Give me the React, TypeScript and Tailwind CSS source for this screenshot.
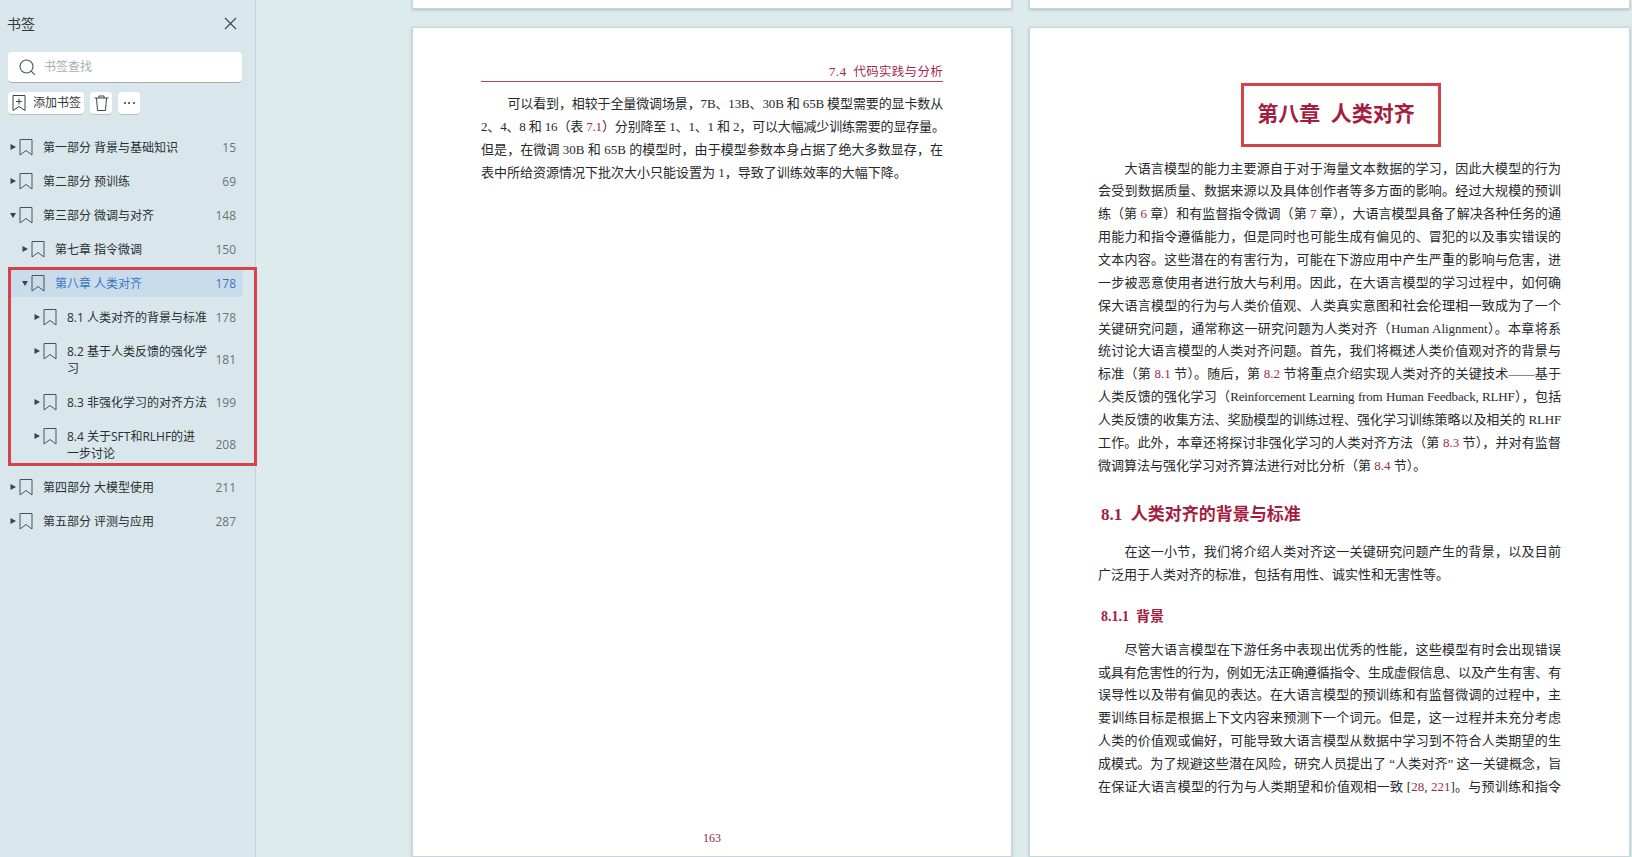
import type { ReactNode } from 'react';

const SERIF = "font-['Liberation_Serif','Noto_Sans_CJK_SC',serif]";

const BOOKMARKS = [
  { depth: 0, open: false, label: '第一部分 背景与基础知识', page: 15 },
  { depth: 0, open: false, label: '第二部分 预训练', page: 69 },
  { depth: 0, open: true, label: '第三部分 微调与对齐', page: 148 },
  { depth: 1, open: false, label: '第七章 指令微调', page: 150 },
  { depth: 1, open: true, label: '第八章 人类对齐', page: 178, active: true },
  { depth: 2, open: false, label: '8.1 人类对齐的背景与标准', page: 178 },
  { depth: 2, open: false, label: '8.2 基于人类反馈的强化学\n习', page: 181 },
  { depth: 2, open: false, label: '8.3 非强化学习的对齐方法', page: 199 },
  { depth: 2, open: false, label: '8.4 关于SFT和RLHF的进\n一步讨论', page: 208 },
  { depth: 0, open: false, label: '第四部分 大模型使用', page: 211 },
  { depth: 0, open: false, label: '第五部分 评测与应用', page: 287 },
];

const DEPTH_PADDING = ['pl-[2px]', 'pl-[14px]', 'pl-[26px]'];

function BookmarkIcon() {
  return (
    <svg width="14" height="17" viewBox="0 0 14 17" fill="none" stroke="#4b5357" strokeWidth="1" className="shrink-0">
      <path d="M1 .5h12v15.5L7 11.5 1 16z" />
    </svg>
  );
}

function Caret({ open }: { open: boolean }) {
  return (
    <svg width="6" height="6" viewBox="0 0 6 6" fill="#3c4346" className="shrink-0">
      {open ? <path d="M0 1h6L3 6z" /> : <path d="M.5 0L6 3 .5 6z" />}
    </svg>
  );
}

function BookmarkRow({ item }: { item: (typeof BOOKMARKS)[number] }) {
  return (
    <div
      className={`ml-2 mr-3 flex pr-[7px] text-[12px] leading-[17px] ${DEPTH_PADDING[item.depth]} ${
        item.active ? 'my-[3px] rounded bg-[#c9dcec] py-[5.5px] text-[#3b76bd]' : 'py-[8.5px] text-[#2a2f31]'
      }`}
    >
      <div className="flex h-[17px] items-center gap-[3px]">
        <Caret open={item.open} />
        <BookmarkIcon />
      </div>
      <div className="ml-[10px] min-w-0 flex-1 whitespace-pre-line">{item.label}</div>
      <div className={`flex w-[24px] shrink-0 items-center justify-end ${item.active ? '' : 'text-[#6b7275]'}`}>
        {item.page}
      </div>
    </div>
  );
}

function Sidebar() {
  return (
    <aside className="flex w-[256px] shrink-0 flex-col border-r border-[#c3d2d8] bg-[#d9e7ec] font-['Open_Sans','Noto_Sans_CJK_SC',sans-serif]">
      <div className="flex h-[46px] items-center justify-between pl-[7px] pr-[18px] text-[14px] text-[#33393c]">
        <span>书签</span>
        <svg width="13" height="13" viewBox="0 0 13 13" stroke="#3d4447" strokeWidth="1.1">
          <path d="M1 1l11 11M12 1L1 12" />
        </svg>
      </div>
      <div className="mx-2 mt-[6px] flex h-[31px] w-[234px] items-center gap-[8px] rounded border-b border-[#a3adb0] bg-white pl-[11px] text-[12px] text-[#a9aeb0]">
        <svg width="17" height="17" viewBox="0 0 17 17" fill="none" stroke="#4d5558" strokeWidth="1.1">
          <circle cx="7.5" cy="7.5" r="6.5" />
          <path d="M12.2 12.2l3.6 3.6" />
        </svg>
        书签查找
      </div>
      <div className="ml-2 mt-[9px] flex h-[23px] gap-[6px] text-[12px] text-[#33393c]">
        <div className="flex w-[76px] items-center rounded border-b border-[#b5c0c3] bg-white pl-[4px]">
          <svg width="14" height="16" viewBox="0 0 14 16" fill="none" stroke="#3d4447" strokeWidth="1">
            <path d="M1 .5h12v15L7 11.5 1 15.5zM7 3.5v6M4 6.5h6" />
          </svg>
          <span className="ml-[7px]">添加书签</span>
        </div>
        <div className="flex w-[22px] items-center justify-center rounded border-b border-[#b5c0c3] bg-white">
          <svg width="15" height="16" viewBox="0 0 15 16" fill="none" stroke="#3d4447" strokeWidth="1">
            <path d="M.5 3h14M5 3V1h5v2M2.5 3l1 12.5h8l1-12.5" />
          </svg>
        </div>
        <div className="flex w-[22px] items-center justify-center gap-[2.5px] rounded border-b border-[#b5c0c3] bg-white">
          <span className="size-[2px] rounded-full bg-[#33393c]" />
          <span className="size-[2px] rounded-full bg-[#33393c]" />
          <span className="size-[2px] rounded-full bg-[#33393c]" />
        </div>
      </div>
      <div className="relative mt-[15px]">
        {BOOKMARKS.map((item) => (
          <BookmarkRow key={item.label} item={item} />
        ))}
        <div className="pointer-events-none absolute left-[8px] top-[137px] h-[199px] w-[249px] border-[3px] border-[#d4434a]" />
      </div>
    </aside>
  );
}

function Line({ children, indent, last, tight }: { children: ReactNode; indent?: boolean; last?: boolean; tight?: boolean }) {
  return (
    <div
      className={`whitespace-nowrap text-[13px] leading-[22.85px] text-[#26292b] ${indent ? 'pl-[26.4px]' : ''} ${
        tight ? 'tracking-[-0.16px]' : ''
      } ${last ? '' : 'text-justify [text-align-last:justify]'}`}
    >
      {children}
    </div>
  );
}

function Ref({ children }: { children: ReactNode }) {
  return <span className="text-[#9c2b45]">{children}</span>;
}

function LeftPage() {
  return (
    <section className="flex min-h-0 flex-1 flex-col border border-[#c8d6d8] bg-white px-[68px] pt-[37px] shadow-[0_1px_3px_rgba(90,120,130,0.4)]">
      <div className="h-[17px] border-b-[1.5px] border-[#b8456a] text-right text-[12.5px] leading-[14px] tracking-[0.3px] text-[#a4294f]">
        <span className="text-[13.5px]">7.4</span>&nbsp; 代码实践与分析
      </div>
      <div className="mt-[11px]">
        <Line indent tight>可以看到，相较于全量微调场景，7B、13B、30B 和 65B 模型需要的显卡数从</Line>
        <Line tight>2、4、8 和 16（表 <Ref>7.1</Ref>）分别降至 1、1、1 和 2，可以大幅减少训练需要的显存量。</Line>
        <Line>但是，在微调 30B 和 65B 的模型时，由于模型参数本身占据了绝大多数显存，在</Line>
        <Line last>表中所给资源情况下批次大小只能设置为 1，导致了训练效率的大幅下降。</Line>
      </div>
      <div className="mb-[10px] mt-auto text-center text-[12px] leading-4 text-[#8a2a4a]">163</div>
    </section>
  );
}

function RightPage() {
  return (
    <section className="min-h-0 flex-1 border border-[#c8d6d8] bg-white px-[68px] pt-[55px] shadow-[0_1px_3px_rgba(90,120,130,0.4)]">
      <div className="ml-[143px] flex h-[64px] w-[200px] items-center justify-center border-[3px] border-[#d4434a] pr-[10px] text-[21px] font-bold text-[#a51c3e]">
        第八章&nbsp; 人类对齐
      </div>
      <div className="mt-[10.6px]">
        <Line indent>大语言模型的能力主要源自于对于海量文本数据的学习，因此大模型的行为</Line>
        <Line>会受到数据质量、数据来源以及具体创作者等多方面的影响。经过大规模的预训</Line>
        <Line>练（第 <Ref>6</Ref> 章）和有监督指令微调（第 <Ref>7</Ref> 章），大语言模型具备了解决各种任务的通</Line>
        <Line>用能力和指令遵循能力，但是同时也可能生成有偏见的、冒犯的以及事实错误的</Line>
        <Line>文本内容。这些潜在的有害行为，可能在下游应用中产生严重的影响与危害，进</Line>
        <Line>一步被恶意使用者进行放大与利用。因此，在大语言模型的学习过程中，如何确</Line>
        <Line>保大语言模型的行为与人类价值观、人类真实意图和社会伦理相一致成为了一个</Line>
        <Line>关键研究问题，通常称这一研究问题为人类对齐（Human Alignment）。本章将系</Line>
        <Line>统讨论大语言模型的人类对齐问题。首先，我们将概述人类价值观对齐的背景与</Line>
        <Line>标准（第 <Ref>8.1</Ref> 节）。随后，第 <Ref>8.2</Ref> 节将重点介绍实现人类对齐的关键技术——基于</Line>
        <Line tight>人类反馈的强化学习（Reinforcement Learning from Human Feedback, RLHF），包括</Line>
        <Line tight>人类反馈的收集方法、奖励模型的训练过程、强化学习训练策略以及相关的 RLHF</Line>
        <Line>工作。此外，本章还将探讨非强化学习的人类对齐方法（第 <Ref>8.3</Ref> 节），并对有监督</Line>
        <Line last>微调算法与强化学习对齐算法进行对比分析（第 <Ref>8.4</Ref> 节）。</Line>
      </div>
      <h2 className="ml-[3px] mt-[26px] h-[24px] text-[17px] font-bold leading-[24px] text-[#a51c3e]">8.1&nbsp; 人类对齐的背景与标准</h2>
      <div className="mt-[13.6px]">
        <Line indent>在这一小节，我们将介绍人类对齐这一关键研究问题产生的背景，以及目前</Line>
        <Line last>广泛用于人类对齐的标准，包括有用性、诚实性和无害性等。</Line>
      </div>
      <h3 className="ml-[3px] mt-[20.4px] h-[20px] text-[14px] font-bold leading-[20px] text-[#a51c3e]">8.1.1&nbsp; 背景</h3>
      <div className="mt-[11.6px]">
        <Line indent>尽管大语言模型在下游任务中表现出优秀的性能，这些模型有时会出现错误</Line>
        <Line tight>或具有危害性的行为，例如无法正确遵循指令、生成虚假信息、以及产生有害、有</Line>
        <Line>误导性以及带有偏见的表达。在大语言模型的预训练和有监督微调的过程中，主</Line>
        <Line>要训练目标是根据上下文内容来预测下一个词元。但是，这一过程并未充分考虑</Line>
        <Line>人类的价值观或偏好，可能导致大语言模型从数据中学习到不符合人类期望的生</Line>
        <Line tight>成模式。为了规避这些潜在风险，研究人员提出了 “人类对齐” 这一关键概念，旨</Line>
        <Line>在保证大语言模型的行为与人类期望和价值观相一致 [<Ref>28</Ref>, <Ref>221</Ref>]。与预训练和指令</Line>
      </div>
    </section>
  );
}

export default function App() {
  return (
    <div lang="zh-CN" className="flex h-screen overflow-hidden bg-[#deebec]">
      <Sidebar />
      <main className={`flex min-w-0 flex-1 flex-col pl-[156px] pr-[2px] ${SERIF}`}>
        <div className="grid h-[9px] shrink-0 grid-cols-[600px_601px] gap-x-[17px]">
          <div className="border-x border-b border-[#c8d6d8] bg-white shadow-[0_1px_3px_rgba(90,120,130,0.4)]" />
          <div className="border-x border-b border-[#c8d6d8] bg-white shadow-[0_1px_3px_rgba(90,120,130,0.4)]" />
        </div>
        <div className="mt-[18px] grid min-h-0 flex-1 grid-cols-[600px_601px] gap-x-[17px]">
          <LeftPage />
          <RightPage />
        </div>
      </main>
    </div>
  );
}
